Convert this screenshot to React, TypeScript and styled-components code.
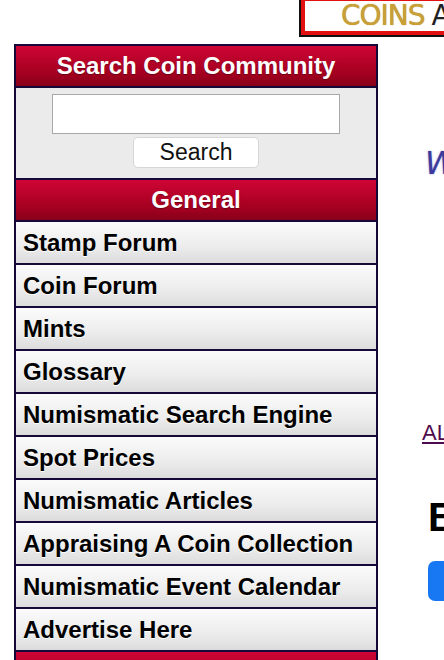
import styled, { createGlobalStyle } from 'styled-components';

const GlobalStyle = createGlobalStyle`
  html, body {
    margin: 0;
    padding: 0;
    background: #fff;
    overflow: hidden;
    font-family: 'Liberation Sans', Arial, sans-serif;
  }
`;

const Page = styled.div`
  width: 444px;
  height: 660px;
  overflow: hidden;
`;

const Top = styled.div`
  display: flex;
  align-items: flex-start;
  height: 44px;
  padding-left: 301px;
`;

const Logo = styled.div`
  flex: none;
  width: 200px;
  height: 30px;
  margin-top: -3px;
  border: 4px solid #e31010;
  box-shadow: -2px 2px 0 #111;
  background: #fff;
  display: flex;
  align-items: flex-end;
  padding-left: 36px;
  font-family: 'DejaVu Sans', sans-serif;
  font-size: 28px;
  line-height: 30px;
  letter-spacing: -1px;
  white-space: nowrap;
  .gold {
    color: #c9a038;
    margin-right: 7px;
    text-shadow: 0 0 1px #a87f1a;
  }
  .dark {
    color: #222;
  }
`;

const Body = styled.div`
  display: flex;
  align-items: flex-start;
  padding-left: 14px;
`;

const Sidebar = styled.div`
  width: 360px;
  flex: none;
  border: 2px solid #17083a;
  border-bottom: none;
`;

const Heading = styled.div`
  height: 40px;
  display: flex;
  align-items: center;
  justify-content: center;
  background: linear-gradient(#cf0535, #a3001f 70%, #88001a);
  color: #fff;
  font-weight: bold;
  font-size: 24px;
  text-shadow: 0 1px 1px rgba(0, 0, 0, 0.35);
  border-bottom: 2px solid #17083a;
`;

const SearchBox = styled.form`
  background: #ebebeb;
  display: flex;
  flex-direction: column;
  align-items: center;
  padding: 6px 0 10px;
  gap: 3px;
  border-bottom: 2px solid #17083a;
`;

const Field = styled.input`
  box-sizing: border-box;
  width: 288px;
  height: 40px;
  border: 1px solid #a8a8a8;
  background: #fff;
  margin: 0;
`;

const Button = styled.button`
  box-sizing: border-box;
  width: 126px;
  height: 31px;
  border: 1px solid #d6d6d6;
  border-radius: 5px;
  background: #fff;
  font-family: 'Liberation Sans', Arial, sans-serif;
  font-size: 23px;
  line-height: 29px;
  color: #111;
  padding: 0;
`;

const Row = styled.a`
  display: flex;
  align-items: center;
  height: 41px;
  padding-left: 7px;
  background: linear-gradient(#fbfbfb, #ececec 60%, #dcdcdc);
  border-bottom: 2px solid #17083a;
  color: #000;
  font-weight: bold;
  font-size: 24px;
  text-decoration: none;
  text-shadow: 0 1px 0 #fff;
  white-space: nowrap;
`;

const Main = styled.div`
  margin-left: 44px;
  display: flex;
  flex-direction: column;
  white-space: nowrap;
`;

const Welcome = styled.div`
  margin-top: 100px;
  margin-left: 3px;
  font-size: 32px;
  color: #3d3a9e;
  font-family: 'DejaVu Sans', sans-serif;
  font-style: italic;
  text-shadow: 0 0 2px rgba(60, 58, 160, 0.5);
`;

const AllLink = styled.a`
  margin-top: 238px;
  font-size: 22px;
  color: #4e0c4e;
  text-decoration: underline;
`;

const Title = styled.h2`
  margin: 51px 0 0 6px;
  font-size: 40px;
  font-weight: bold;
  color: #000;
  line-height: 40px;
`;

const BlueButton = styled.div`
  margin: 24px 0 0 6px;
  width: 120px;
  height: 40px;
  border-radius: 7px;
  background: #1877f2;
`;

const links = [
  'Stamp Forum',
  'Coin Forum',
  'Mints',
  'Glossary',
  'Numismatic Search Engine',
  'Spot Prices',
  'Numismatic Articles',
  'Appraising A Coin Collection',
  'Numismatic Event Calendar',
  'Advertise Here',
];

function App() {
  return (
    <Page>
      <GlobalStyle />
      <Top>
        <Logo>
          <span className="gold">COINS</span>
          <span className="dark">AUCTIONS</span>
        </Logo>
      </Top>
      <Body>
        <Sidebar>
          <Heading>Search Coin Community</Heading>
          <SearchBox onSubmit={(e) => e.preventDefault()}>
            <Field type="text" />
            <Button type="submit">Search</Button>
          </SearchBox>
          <Heading>General</Heading>
          {links.map((l) => (
            <Row key={l} href="#">
              {l}
            </Row>
          ))}
          <Heading>Community</Heading>
        </Sidebar>
        <Main>
          <Welcome>Welcome</Welcome>
          <AllLink href="#">ALL</AllLink>
          <Title>Buy</Title>
          <BlueButton />
        </Main>
      </Body>
    </Page>
  );
}

export default App;
